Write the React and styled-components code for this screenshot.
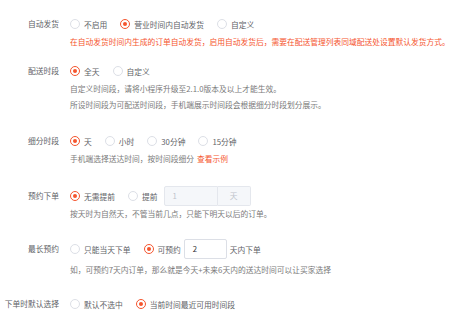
import React from "react";
import styled, { createGlobalStyle } from "styled-components";

const colors = {
  label: "#606266",
  text: "#606266",
  hint: "#7a7a7a",
  red: "#f5552e",
  border: "#dcdfe6",
  disabledBg: "#f5f7fa",
  disabledText: "#c0c4cc",
};

const GlobalStyle = createGlobalStyle`
  body {
    margin: 0;
    background: #fff;
    font-family: "Noto Sans CJK SC", "Noto Sans", sans-serif;
    font-size: 7.75px;
  }
`;

const Form = styled.div`
  width: 450px;
  height: 322px;
  padding-top: 14px;
  box-sizing: border-box;
  overflow: hidden;
`;

const Item = styled.div`
  display: flex;
  margin-top: ${(p) => p.$gap || 0}px;
`;

const Label = styled.div`
  width: 59px;
  flex-shrink: 0;
  text-align: right;
  color: ${colors.label};
  height: 20px;
  line-height: 20px;
  white-space: nowrap;
`;

const Content = styled.div`
  margin-left: 11px;
  display: flex;
  flex-direction: column;
`;

const Controls = styled.div`
  display: flex;
  align-items: center;
  height: 20px;
  gap: 13px;
`;

const Option = styled.label`
  display: flex;
  align-items: center;
  gap: 4px;
  color: ${colors.text};
  white-space: nowrap;
`;

const Circle = styled.span`
  width: 10px;
  height: 10px;
  box-sizing: border-box;
  border-radius: 50%;
  border: 1px solid ${(p) => (p.$on ? colors.red : colors.border)};
  display: flex;
  align-items: center;
  justify-content: center;
  &::after {
    content: "";
    width: 4px;
    height: 4px;
    border-radius: 50%;
    background: ${(p) => (p.$on ? colors.red : "transparent")};
  }
`;

const Hint = styled.div`
  line-height: 16px;
  margin-top: ${(p) => p.$top || 0}px;
  color: ${(p) => (p.$red ? colors.red : colors.hint)};
  white-space: nowrap;
`;

const Link = styled.span`
  color: ${colors.red};
  margin-left: 3px;
`;

const InputGroup = styled.div`
  display: flex;
  height: 20px;
  margin-left: ${(p) => p.$left || 0}px;
`;

const Input = styled.div`
  width: ${(p) => p.$w}px;
  box-sizing: border-box;
  height: 20px;
  line-height: 18px;
  padding-left: 8px;
  border: 1px solid ${(p) => (p.$disabled ? "#e4e7ed" : colors.border)};
  border-radius: ${(p) => (p.$addon ? "2px 0 0 2px" : "2px")};
  background: ${(p) => (p.$disabled ? colors.disabledBg : "#fff")};
  color: ${(p) => (p.$disabled ? colors.disabledText : "#303133")};
`;

const Addon = styled.div`
  width: 33px;
  box-sizing: border-box;
  height: 20px;
  line-height: 18px;
  text-align: center;
  border: 1px solid #e4e7ed;
  border-left: none;
  border-radius: 0 2px 2px 0;
  background: ${colors.disabledBg};
  color: ${colors.disabledText};
`;

const Suffix = styled.span`
  color: ${colors.text};
  margin-left: -1px;
`;

const Radio = ({ on, children }) => (
  <Option>
    <Circle $on={on} />
    {children}
  </Option>
);

export default function App() {
  return (
    <Form>
      <GlobalStyle />
      <Item>
        <Label>自动发货</Label>
        <Content>
          <Controls>
            <Radio>不启用</Radio>
            <Radio on>营业时间内自动发货</Radio>
            <Radio>自定义</Radio>
          </Controls>
          <Hint $red>
            在自动发货时间内生成的订单自动发货，启用自动发货后，需要在配送管理列表同域配送处设置默认发货方式。
          </Hint>
        </Content>
      </Item>

      <Item $gap={11}>
        <Label>配送时段</Label>
        <Content>
          <Controls>
            <Radio on>全天</Radio>
            <Radio>自定义</Radio>
          </Controls>
          <Hint>自定义时间段，请将小程序升级至2.1.0版本及以上才能生效。</Hint>
          <Hint>所设时间段为可配送时间段，手机端展示时间段会根据细分时段划分展示。</Hint>
        </Content>
      </Item>

      <Item $gap={18}>
        <Label>细分时段</Label>
        <Content>
          <Controls>
            <Radio on>天</Radio>
            <Radio>小时</Radio>
            <Radio>30分钟</Radio>
            <Radio>15分钟</Radio>
          </Controls>
          <Hint>
            手机端选择送达时间，按时间段细分<Link>查看示例</Link>
          </Hint>
        </Content>
      </Item>

      <Item $gap={19}>
        <Label>预约下单</Label>
        <Content>
          <Controls>
            <Radio on>无需提前</Radio>
            <Option>
              <Circle />
              提前
              <InputGroup $left={2}>
                <Input $w={54} $disabled $addon>
                  1
                </Input>
                <Addon>天</Addon>
              </InputGroup>
            </Option>
          </Controls>
          <Hint>按天时为自然天，不管当前几点，只能下明天以后的订单。</Hint>
        </Content>
      </Item>

      <Item $gap={17}>
        <Label>最长预约</Label>
        <Content>
          <Controls>
            <Radio>只能当天下单</Radio>
            <Option>
              <Circle $on />
              可预约
              <InputGroup $left={-1}>
                <Input $w={43}>2</Input>
              </InputGroup>
              <Suffix>天内下单</Suffix>
            </Option>
          </Controls>
          <Hint $top={3}>如，可预约7天内订单，那么就是今天+未来6天内的送达时间可以让买家选择</Hint>
        </Content>
      </Item>

      <Item $gap={16}>
        <Label>下单时默认选择</Label>
        <Content>
          <Controls>
            <Radio>默认不选中</Radio>
            <Radio on>当前时间最近可用时间段</Radio>
          </Controls>
        </Content>
      </Item>
    </Form>
  );
}
